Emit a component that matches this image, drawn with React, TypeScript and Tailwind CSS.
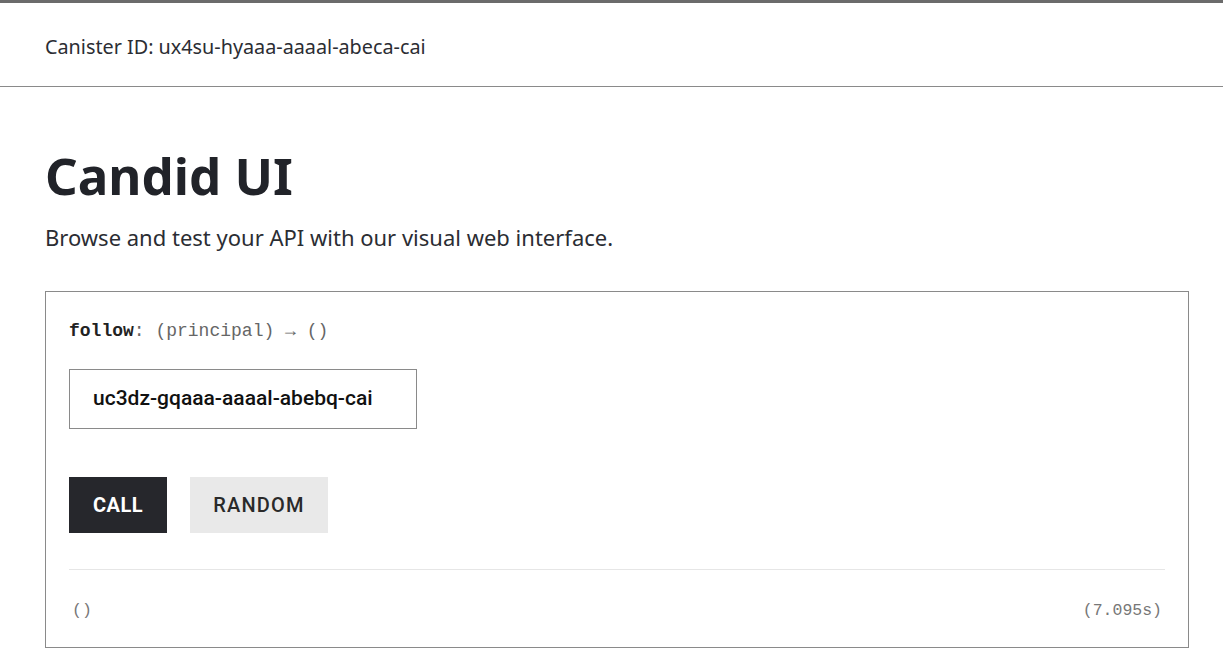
import React from "react";

export default function App() {
  return (
    <div className="min-h-screen bg-white text-[#212529] border-t-[3px] border-[#6b6b6b]">
      <header className="h-[84px] border-b border-[#8a8a8a] flex items-center px-[45px] font-['Noto_Sans',sans-serif] text-[19.8px] text-[#2b2d33]">
        <span className="mt-[4px]">Canister ID: ux4su-hyaaa-aaaal-abeca-cai</span>
      </header>
      <main className="pl-[45px] pr-[34px] pt-[52px] font-['Noto_Sans',sans-serif]">
        <h1 className="text-[51px] font-bold leading-[72px] text-[#212329]">Candid UI</h1>
        <p className="mt-[11px] text-[22px] leading-[30px] text-[#2b2d33]">
          Browse and test your API with our visual web interface.
        </p>
        <section className="mt-[39px] border border-[#8a8a8a] px-[23px] pt-[26px] pb-[25px]">
          <div className="font-['Liberation_Mono',monospace] text-[18px] leading-[26px] text-[#666]">
            <span className="font-bold text-[#222]">follow</span>: (principal) → ()
          </div>
          <div className="mt-[25px] w-[348px] h-[60px] border border-[#8a8a8a] flex items-center px-[23px] font-['Roboto',sans-serif] font-medium text-[21px] text-[#111]">
            uc3dz-gqaaa-aaaal-abebq-cai
          </div>
          <div className="mt-[48px] flex gap-[23px]">
            <button className="w-[98px] h-[56px] bg-[#26272c] text-white font-['Roboto',sans-serif] font-bold text-[20px] tracking-[0.5px]">
              CALL
            </button>
            <button className="w-[138px] h-[56px] bg-[#e9e9e9] text-[#2a2a2a] font-['Roboto',sans-serif] font-medium text-[20px] tracking-[1.2px]">
              RANDOM
            </button>
          </div>
          <div className="mt-[36px] border-t border-[#e6e6e6] pt-[27px] pb-[0px] -mb-[3px] flex justify-between items-center font-['Liberation_Mono',monospace] text-[16.5px] leading-[28px] text-[#777]">
            <span className="pl-[3px]">()</span>
            <span className="pr-[3px]">(7.095s)</span>
          </div>
        </section>
      </main>
    </div>
  );
}
